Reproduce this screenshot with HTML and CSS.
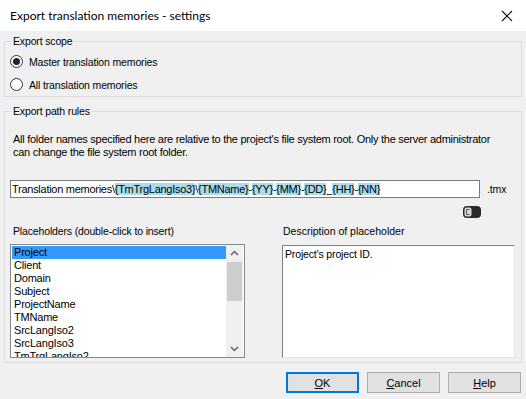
FILE: index.html
```html
<!DOCTYPE html>
<html>
<head>
<meta charset="utf-8">
<link rel="stylesheet" href="styles.css">
</head>
<body>
<div class="window">
  <div class="titlebar">
    <span class="title">Export translation memories - settings</span>
    <svg class="close" width="12" height="12" viewBox="0 0 12 12"><path d="M1 1 L11 11 M11 1 L1 11" stroke="#111" stroke-width="1.1" fill="none"/></svg>
  </div>
  <div class="content">
    <fieldset class="group scope">
      <legend>Export scope</legend>
      <label class="radio-row">
        <span class="radio checked"><span class="dot"></span></span>
        <span>Master translation memories</span>
      </label>
      <label class="radio-row">
        <span class="radio"></span>
        <span>All translation memories</span>
      </label>
    </fieldset>
    <fieldset class="group rules">
      <legend>Export path rules</legend>
      <p class="info">All folder names specified here are relative to the project's file system root. Only the server administrator<br>can change the file system root folder.</p>
      <div class="path-row">
        <div class="path-input">Translation memories\<span class="ph">{TmTrgLangIso3}</span>\<span class="ph">{TMName}</span>-<span class="ph">{YY}</span>-<span class="ph">{MM}</span>-<span class="ph">{DD}</span>_<span class="ph">{HH}</span>-<span class="ph">{NN}</span></div>
        <span class="ext">.tmx</span>
      </div>
      <div class="toggle-row">
        <svg class="toggle" width="18" height="12" viewBox="0 0 18 12">
          <rect x="0" y="0" width="18" height="12" rx="4" fill="#2b2b2b"/>
          <rect x="1.5" y="1.5" width="7" height="9" rx="2" fill="#d8d8d8"/>
          <path d="M6.5 3.5 H3.5 V8.5 H6.5" stroke="#555" stroke-width="1" fill="none"/>
        </svg>
      </div>
      <div class="columns">
        <div class="col left">
          <div class="col-label">Placeholders (double-click to insert)</div>
          <div class="listbox">
            <div class="items">
              <div class="item selected">Project</div>
              <div class="item">Client</div>
              <div class="item">Domain</div>
              <div class="item">Subject</div>
              <div class="item">ProjectName</div>
              <div class="item">TMName</div>
              <div class="item">SrcLangIso2</div>
              <div class="item">SrcLangIso3</div>
              <div class="item">TmTrgLangIso2</div>
            </div>
            <div class="scrollbar">
              <svg class="arrow" width="17" height="17" viewBox="0 0 17 17"><path d="M5 10 L8.5 6.5 L12 10" stroke="#606060" stroke-width="1.4" fill="none"/></svg>
              <div class="track"><div class="thumb"></div></div>
              <svg class="arrow" width="17" height="17" viewBox="0 0 17 17"><path d="M5 7 L8.5 10.5 L12 7" stroke="#606060" stroke-width="1.4" fill="none"/></svg>
            </div>
          </div>
        </div>
        <div class="col right">
          <div class="col-label desc-label">Description of placeholder</div>
          <div class="descbox">Project's project ID.</div>
        </div>
      </div>
    </fieldset>
    <div class="buttons">
      <button class="btn default"><u>O</u>K</button>
      <button class="btn"><u>C</u>ancel</button>
      <button class="btn"><u>H</u>elp</button>
    </div>
  </div>
</div>
</body>
</html>
```
FILE: styles.css
```css
* { box-sizing: border-box; }
html, body { margin: 0; padding: 0; }
body {
  font-family: "Liberation Sans", Arial, sans-serif;
  font-size: 10.5px;
  letter-spacing: -0.15px;
  color: #000;
  background: #f0f0f0;
}
.window {
  width: 526px;
  height: 399px;
  background: #f0f0f0;
  overflow: hidden;
  display: flex;
  flex-direction: column;
}
.titlebar {
  height: 31px;
  background: #fff;
  display: flex;
  align-items: center;
  justify-content: space-between;
  padding: 0 13px 0 10px;
  flex: none;
}
.title {
  font-family: Lato, "Liberation Sans", sans-serif;
  font-size: 12px;
  letter-spacing: 0;
  color: #000;
}
.close { display: block; }
.content {
  padding: 0 4px 0 4px;
  display: flex;
  flex-direction: column;
}
.group {
  margin: 0;
  border: 1px solid #dcdcdc;
  min-width: 0;
}
.group legend {
  padding: 0 2px;
  margin-left: 1px;
  line-height: 13px;
  height: 13px;
}
.scope {
  margin-top: 4px;
  padding: 2px 5px 0 5px;
}
.radio-row {
  display: flex;
  align-items: center;
  height: 23px;
  gap: 6px;
}
.radio {
  width: 13px;
  height: 13px;
  border: 1px solid #333;
  border-radius: 50%;
  background: #fff;
  display: flex;
  align-items: center;
  justify-content: center;
}
.dot {
  width: 7px;
  height: 7px;
  border-radius: 50%;
  background: #222;
}
.rules {
  margin-top: 8px;
  padding: 0 5px 4px 5px;
}
.info {
  margin: 15px 0 0 3px;
  line-height: 13px;
  font-size: 11px;
  letter-spacing: -0.27px;
  white-space: nowrap;
  color: #000;
}
.path-row {
  margin-top: 21px;
  display: flex;
  align-items: center;
}
.path-input {
  width: 470px;
  height: 18px;
  border: 1px solid #7a7a7a;
  background: #fff;
  line-height: 16px;
  padding-left: 1px;
  font-size: 11px;
  letter-spacing: -0.27px;
  white-space: nowrap;
  overflow: hidden;
}
.ph { background: #a9dbeb; }
.ext { margin-left: 7px; }
.toggle-row {
  display: flex;
  padding-left: 453px;
  margin-top: 8px;
  height: 12px;
}
.toggle { display: block; }
.columns {
  display: flex;
  margin-top: 7px;
  gap: 37px;
}
.col { display: flex; flex-direction: column; }
.col.left { width: 235px; }
.col.right { width: 233px; }
.col-label {
  line-height: 13px;
  padding-left: 3px;
  height: 13px;
}
.desc-label { padding-left: 1px; letter-spacing: 0; }
.listbox {
  margin-top: 6px;
  height: 114px;
  border: 1px solid #828790;
  background: #fff;
  display: flex;
  overflow: hidden;
}
.items {
  flex: 1;
  padding: 1px 0 0 1px;
  overflow: hidden;
}
.item {
  height: 13px;
  line-height: 13px;
  padding-left: 2px;
  font-size: 11px;
  letter-spacing: -0.2px;
  white-space: nowrap;
}
.item.selected { background: #3399ff; }
.scrollbar {
  width: 17px;
  background: #f0f0f0;
  display: flex;
  flex-direction: column;
  margin: 0 1px 0 0;
}
.arrow { display: block; flex: none; }
.track { flex: 1; padding: 0 1px; }
.thumb {
  height: 39px;
  background: #cdcdcd;
}
.descbox {
  margin-top: 7px;
  height: 113px;
  background: #fff;
  border-style: solid;
  border-width: 1px;
  border-color: #7f7f7f #e3e3e3 #e3e3e3 #7f7f7f;
  padding: 2px 2px;
  line-height: 13px;
}
.buttons {
  display: flex;
  justify-content: flex-end;
  gap: 8px;
  margin-top: 9px;
  padding-right: 1px;
}
.btn {
  width: 73px;
  height: 21px;
  background: #e1e1e1;
  border: 1px solid #adadad;
  font-family: "Liberation Sans", Arial, sans-serif;
  font-size: 11px;
  color: #000;
  padding: 0;
}
.btn.default { border: 2px solid #0078d7; }
```
